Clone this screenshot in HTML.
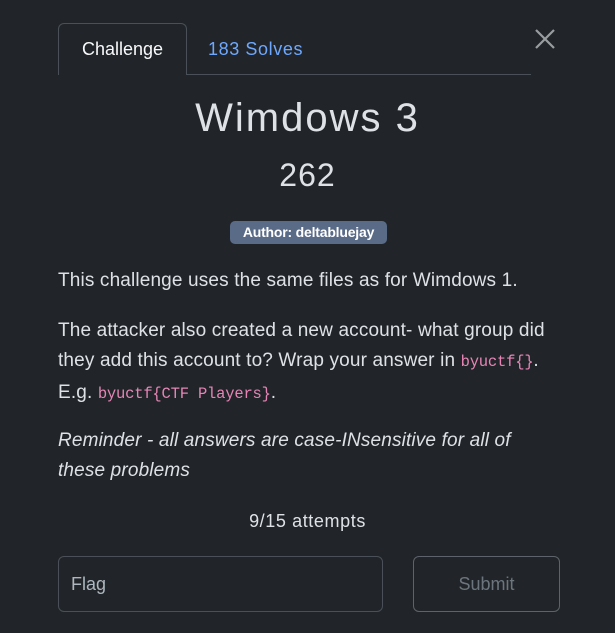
<!DOCTYPE html>
<html><head><meta charset="utf-8"><style>
*{margin:0;padding:0;box-sizing:border-box}
body{width:615px;height:633px;background:#212529;font-family:"Liberation Sans",sans-serif;color:#dee2e6;position:relative;overflow:hidden}
.a{position:absolute;white-space:nowrap}
.p{font-size:19px;letter-spacing:0.15px;left:58px;line-height:20px}
code{font-family:"Liberation Mono",monospace;font-size:15.5px;letter-spacing:-0.2px;color:#e685b5}
</style></head><body>
<div class="a" style="left:58px;top:23px;width:129px;height:52px;border:1px solid #495057;border-bottom:none;border-radius:6px 6px 0 0;background:#212529"></div>
<div class="a" style="left:186px;top:74px;width:345px;height:1px;background:#495057"></div>
<div class="a" style="left:58px;top:39px;width:129px;text-align:center;font-size:18px;color:#f8f9fa;letter-spacing:0px">Challenge</div>
<div class="a" style="left:208px;top:39px;font-size:18px;color:#6ea8fe;letter-spacing:0.6px">183 Solves</div>
<svg class="a" style="left:534px;top:28px" width="22" height="22"><path d="M2 2L20 20M20 2L2 20" stroke="#9a9da0" stroke-width="2.2"/></svg>
<div class="a" style="left:0;width:615px;top:96px;text-align:center;font-size:40px;letter-spacing:2px;color:#dee2e6">Wimdows 3</div>
<div class="a" style="left:0;width:615px;top:157px;text-align:center;font-size:32px;letter-spacing:1px;color:#dee2e6">262</div>
<div class="a" style="left:230px;top:221px;width:157px;height:23px;background:#5a6b88;border-radius:5px;color:#fff;font-weight:bold;font-size:14px;text-align:center;line-height:23px;letter-spacing:-0.2px">Author: deltabluejay</div>
<div class="a p" style="top:271px">This challenge uses the same files as for Wimdows 1.</div>
<div class="a p" style="top:321px">The attacker also created a new account- what group did</div>
<div class="a p" style="top:351px">they add this account to? Wrap your answer in <code>byuctf{}</code>.</div>
<div class="a p" style="top:383px">E.g. <code>byuctf{CTF Players}</code>.</div>
<div class="a p" style="top:431px;font-style:italic">Reminder - all answers are case-INsensitive for all of</div>
<div class="a p" style="top:461px;font-style:italic">these problems</div>
<div class="a" style="left:0;width:615px;top:511px;text-align:center;font-size:18px;letter-spacing:0.6px">9/15 attempts</div>
<div class="a" style="left:58px;top:556px;width:325px;height:56px;border:1px solid #495057;border-radius:6px;font-size:18px;color:#adb5bd;padding-left:12px;line-height:54px">Flag</div>
<div class="a" style="left:413px;top:556px;width:147px;height:56px;border:1px solid #5c636a;border-radius:6px;font-size:18px;color:#6c757d;text-align:center;line-height:54px">Submit</div>
</body></html>
